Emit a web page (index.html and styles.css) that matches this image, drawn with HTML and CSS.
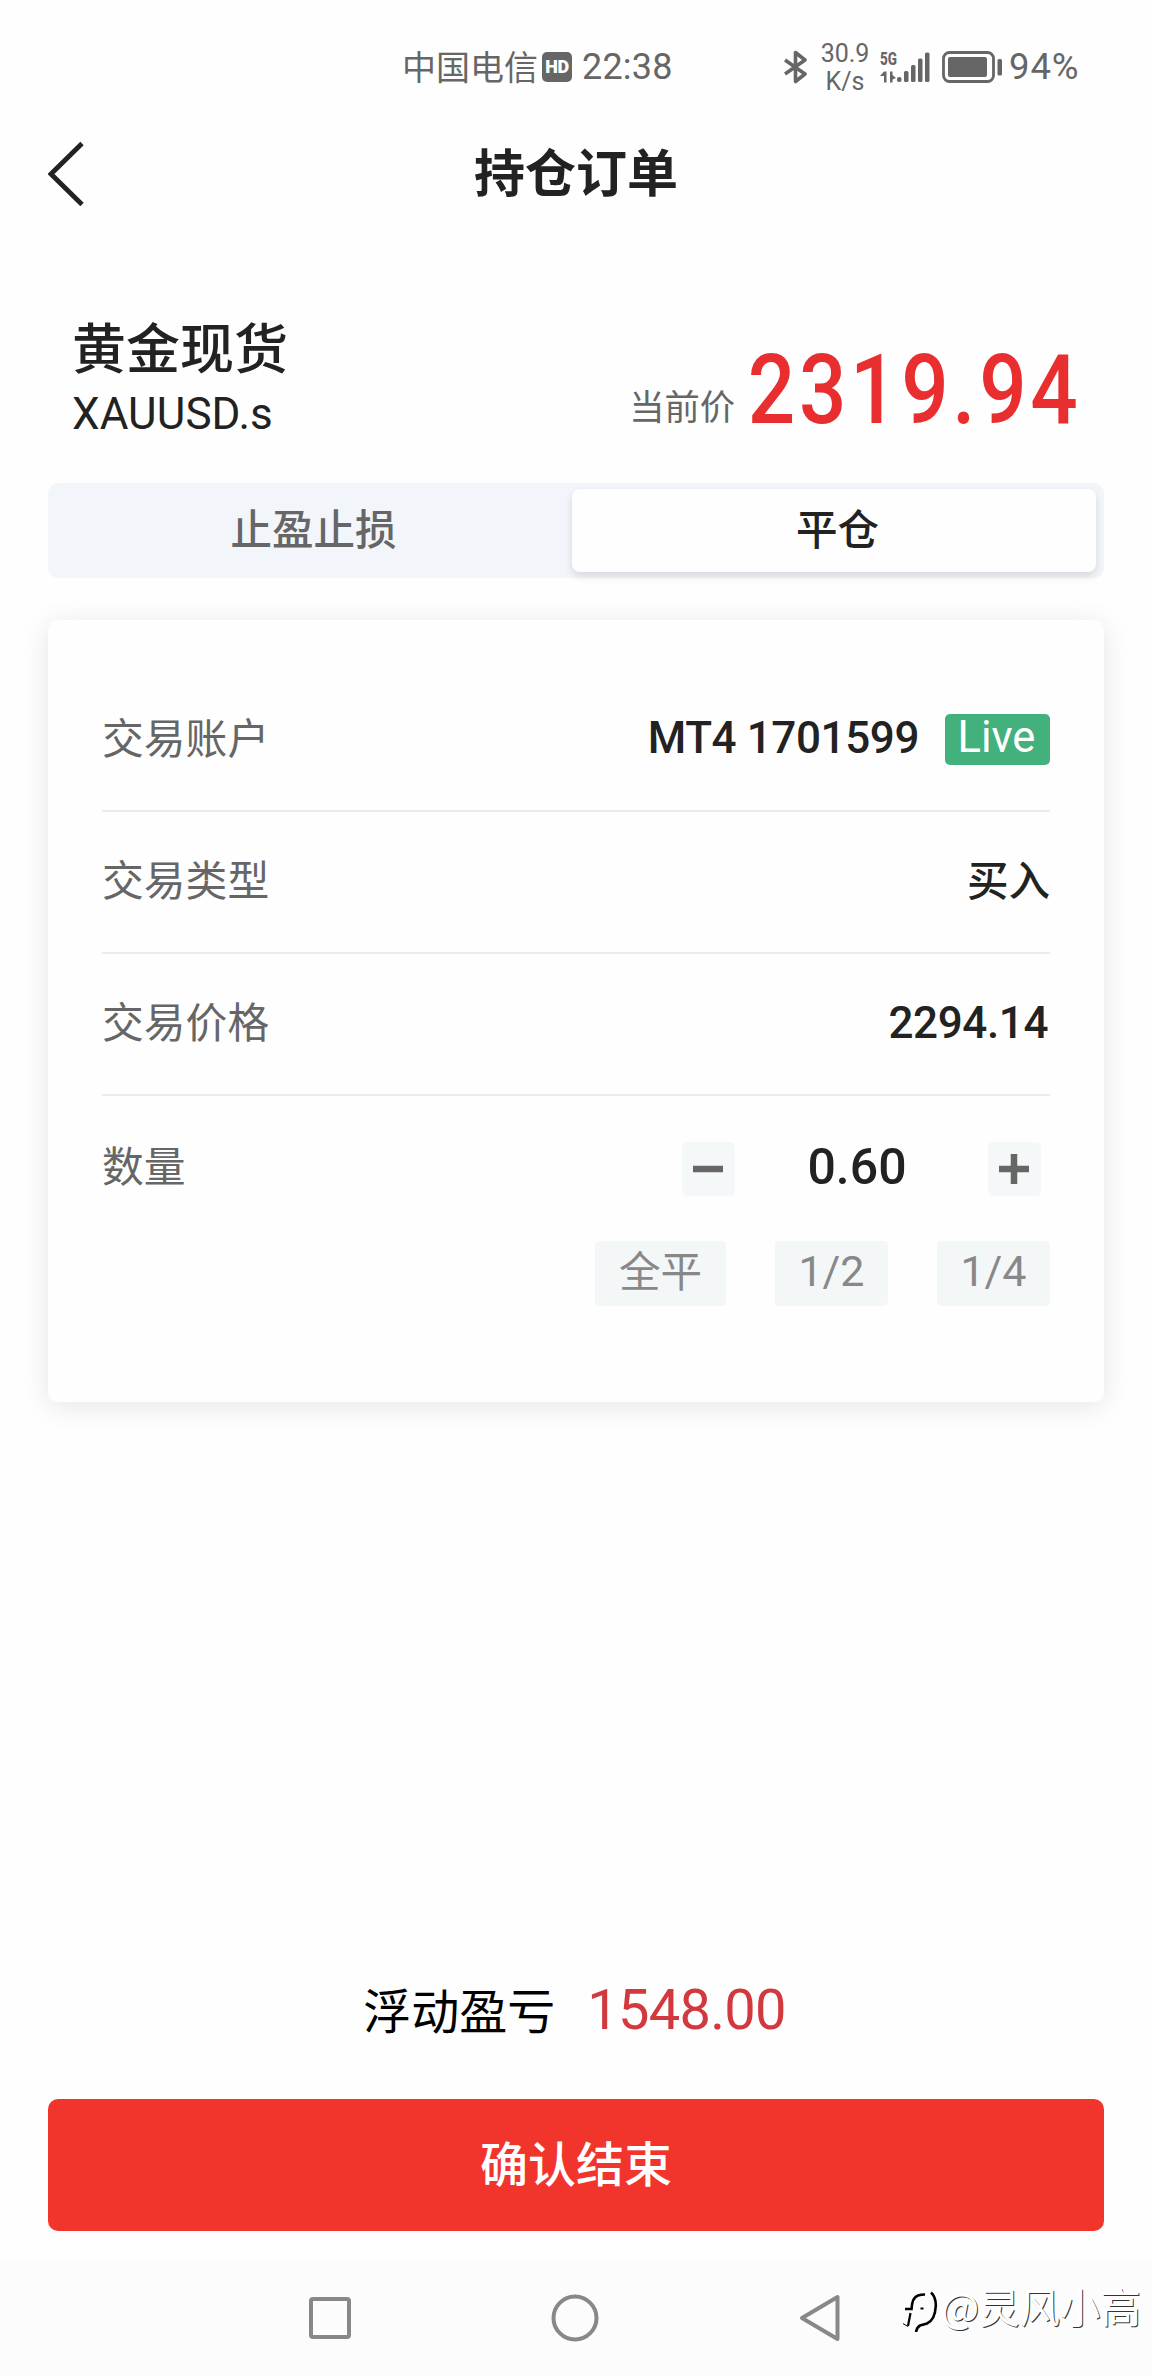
FILE: index.html
```html
<!DOCTYPE html>
<html lang="zh-CN">
<head>
<meta charset="utf-8">
<title>持仓订单</title>
<link rel="stylesheet" href="styles.css">
</head>
<body>
<div class="screen">
  <div class="status">
    <span class="carrier">中国电信</span>
    <span class="hd">HD</span>
    <span class="clock num">22:38</span>
    <svg class="bluetooth" width="24" height="34" viewBox="0 0 24 34" fill="none" stroke="#666" stroke-width="3.6" stroke-linejoin="round"><path d="M1 10 L21 24 L11.500 31.500 V2.500 L21 10 L1 24"/></svg>
    <span class="speed num"><span>30.9</span><span>K/s</span></span>
    <div class="mobile">
      <span class="net">5G</span>
      <svg width="50" height="32" viewBox="0 0 50 32" fill="#666">
        <path d="M4 20.500 V31.500 H6.500 V20.500 Z M0 25 L4 20.500 V25 Z M10 20.500 H12.500 V31.500 H10 Z M12.500 24 L16 27 L12.500 28.500 Z"/>
        <rect x="17" y="26" width="4.500" height="5" rx="2"/><rect x="24" y="20" width="4.500" height="11" rx="1.500"/><rect x="31" y="14" width="4.500" height="17" rx="1.500"/><rect x="38" y="7.500" width="4.500" height="23.500" rx="1.500"/><rect x="45" y="1.500" width="4.500" height="29.500" rx="1.500"/>
      </svg>
    </div>
    <svg class="battery" width="60" height="32" viewBox="0 0 60 32"><rect x="1.500" y="1.500" width="50" height="29" rx="6" fill="none" stroke="#666" stroke-width="2.800"/><rect x="6" y="6" width="39" height="20" rx="2" fill="#666"/><rect x="55.500" y="8" width="4.500" height="16.500" rx="1.500" fill="#666"/></svg>
    <span class="percent num">94%</span>
  </div>

  <header class="header">
    <svg class="back" width="38" height="66" viewBox="0 0 38 66" fill="none" stroke="#222" stroke-width="4.800"><path d="M34 2.500 L3 33 L34 63.500"/></svg>
    <h1 class="title">持仓订单</h1>
  </header>

  <section class="quote">
    <div>
      <div class="name">黄金现货</div>
      <div class="symbol num">XAUUSD.s</div>
    </div>
    <div class="price"><span class="price-label">当前价</span><span class="price-value num">2319.94</span></div>
  </section>

  <div class="tabs">
    <div class="tab">止盈止损</div>
    <div class="tab active">平仓</div>
  </div>

  <section class="card">
    <div class="row"><span class="label">交易账户</span><span class="value num account">MT4 1701599</span><span class="live num">Live</span></div>
    <div class="row"><span class="label">交易类型</span><span class="value">买入</span></div>
    <div class="row"><span class="label">交易价格</span><span class="value num open-price">2294.14</span></div>
    <div class="amount">
      <span class="label">数量</span>
      <div class="stepper">
        <span class="step"><svg width="30" height="30" viewBox="0 0 30 30"><path d="M0 15H30" stroke="#666" stroke-width="6.500"/></svg></span>
        <span class="count num">0.60</span>
        <span class="step"><svg width="30" height="30" viewBox="0 0 30 30"><path d="M0 15H30M15 0V30" stroke="#666" stroke-width="6.500"/></svg></span>
      </div>
    </div>
    <div class="chips"><span class="chip wide">全平</span><span class="chip num">1/2</span><span class="chip num">1/4</span></div>
  </section>

  <div class="profit"><span class="profit-label">浮动盈亏</span><span class="profit-value num">1548.00</span></div>
  <div class="confirm">确认结束</div>

  <nav class="nav">
    <svg width="42" height="42" viewBox="0 0 42 42" fill="none" stroke="#888" stroke-width="4"><rect x="2" y="2" width="38" height="38" rx="2"/></svg>
    <svg width="48" height="48" viewBox="0 0 48 48" fill="none" stroke="#888" stroke-width="4"><circle cx="24" cy="24" r="21.500"/></svg>
    <svg width="42" height="48" viewBox="0 0 42 48" fill="none" stroke="#888" stroke-width="4" stroke-linejoin="round"><path d="M3 24 L38.500 3 V45 Z"/></svg>
  </nav>

  <div class="watermark">
    <svg width="36" height="50" viewBox="0 0 36 50" fill="none" stroke="#000">
      <path d="M2 27 H8.500 Q9 15.500 15 13.500 Q18 12.500 22 12.500" stroke-width="2.600"/>
      <path d="M7.500 31 L5 44" stroke-width="2.200"/>
      <path d="M-1 41 L5 44.500" stroke-width="1"/>
      <path d="M28 10.500 Q33 15 32.800 24 Q32 38 24 41.500 L17 43.500 Q14 45 13 50" stroke-width="2.600"/>
      <path d="M17.500 26.500 H20.500" stroke-width="2"/>
    </svg>
    <span>@灵风小高</span>
  </div>
</div>
</body>
</html>
```
FILE: styles.css
```css
* { box-sizing: border-box; }
body { margin: 0; background: #fefefe; }
svg { display: block; flex: none; }
.screen {
  position: relative;
  display: flex;
  flex-direction: column;
  width: 1152px;
  height: 2376px;
  overflow: hidden;
  color: #222;
  font-family: "Noto Sans CJK SC", sans-serif;
  white-space: nowrap;
}
.num { font-family: Roboto, sans-serif; }

.status { display: flex; align-items: center; height: 133px; margin-bottom: -33px; padding-left: 402px; color: #666; }
.carrier { width: 136px; font-size: 34px; line-height: 38px; padding-bottom: 2px; }
.hd {
  width: 30px; height: 30px; margin: 1px 0 0 4px; border-radius: 5px;
  background: #666; color: #fff;
  font: 900 18px/30px Roboto, sans-serif; letter-spacing: -0.5px; text-align: center;
}
.clock { width: 92px; margin-left: 10px; font-size: 36px; letter-spacing: .2px; }
.bluetooth { margin-left: 110px; }
.speed {
  display: flex; flex-direction: column; align-items: center;
  width: 56px; margin: 2px 0 0 9px; font-size: 25px; line-height: 27.500px;
}
.mobile { position: relative; margin-left: 7px; }
.net {
  position: absolute; left: 0; top: -2px;
  font: 800 18px/20px Roboto, sans-serif; transform: scaleX(.75); transform-origin: left;
}
.battery { margin-left: 12px; }
.percent { margin-left: 7px; font-size: 36.500px; letter-spacing: .9px; }

.header { display: flex; align-items: center; height: 148px; padding: 0 48px; }
.title {
  flex: 1; margin: -8px 38px 0 0; text-align: center;
  font-size: 51px; font-weight: 700; line-height: 60px;
}

.quote { display: flex; justify-content: space-between; height: 235px; padding: 68px 77px 0 72px; }
.name { font-size: 54px; font-weight: 500; line-height: 60px; }
.symbol { margin-top: 13px; font-size: 44px; line-height: 50px; letter-spacing: .1px; }
.price { display: flex; align-items: baseline; height: 110px; margin-top: 19px; line-height: 110px; }
.price-label { margin: 0 12.500px 0 0; color: #666; font-size: 35.300px; position: relative; top: -3px; }
.price-value {
  margin: 0 -6px 0 -50px; color: #e92e30;
  font-size: 96px; font-weight: 500; letter-spacing: 4.200px;
  transform: scaleX(.87); transform-origin: right;
}

.tabs {
  display: flex; height: 95px; margin: 0 48px; padding: 6px 8px 6px 0;
  border-radius: 10px; background: #f2f5fa;
}
.tab {
  flex: 1; height: 83px; padding-left: 7px; color: #666; text-align: center;
  font-size: 41.500px; font-weight: 500; line-height: 77px;
}
.active { border-radius: 8px; background: #fefefe; color: #222; box-shadow: 0 4px 8px rgba(0, 0, 0, .12); }

.card {
  height: 782px; margin: 42px 48px 0; padding: 50px 54px 0;
  border-radius: 10px; background: #fefefe; box-shadow: 0 4px 28px rgba(0, 0, 0, .1);
}
.row { display: flex; align-items: center; height: 142px; padding-bottom: 8px; border-bottom: 2px solid #ebebeb; }
.label { flex: 1; color: #666; font-size: 41.800px; line-height: 50px; }
.value { font-size: 41.500px; font-weight: 500; }
.value.num { padding-top: 3px; font-size: 44px; }
.account { letter-spacing: -.4px; }
.open-price { margin-right: 2px; letter-spacing: -.4px; }
.row .open-price { padding-top: 6px; }
.live {
  width: 105px; height: 51px; margin: 7px 0 0 26px; padding-right: 2px; border-radius: 5px;
  background: #43b17c; color: #fff; font-size: 43.500px; line-height: 47px; text-align: center;
}
.amount { display: flex; align-items: center; height: 54px; margin-top: 46px; }
.amount .label { margin-top: -10px; }
.stepper { display: flex; justify-content: space-between; align-items: center; width: 359px; margin-right: 9.500px; }
.step { display: flex; align-items: center; justify-content: center; width: 53px; height: 54px; border-radius: 5px; background: #f5f8f8; }
.count { margin-top: -5px; padding-right: 8px; font-size: 50px; font-weight: 500; }
.chips { display: flex; justify-content: flex-end; gap: 49px; margin-top: 45px; }
.chip {
  width: 113px; height: 65px; border-radius: 4px; background: #f4f7f8; color: #888;
  font-size: 43px; line-height: 61px; text-align: center;
}
.wide { width: 131px; font-size: 41.500px; line-height: 56px; }

.profit { display: flex; align-items: center; justify-content: center; height: 70px; margin-top: 571px; padding-right: 3px; }
.profit-label { color: #000; font-size: 48px; }
.profit-value { margin: 4px 0 0 32px; color: #d1393f; font-size: 56px; letter-spacing: -.7px; }
.confirm {
  height: 132px; margin: 56px 48px 0; border-radius: 10px;
  background: #f2352c; color: #fff; text-align: center;
  font-size: 48px; font-weight: 500; line-height: 124px;
}
.nav { display: flex; align-items: center; justify-content: space-between; height: 115px; margin-top: 30px; padding: 0 311px 1px 309px; background: #fcfcfc; }
.watermark {
  position: absolute; left: 903px; top: 2281px; display: flex; align-items: center; gap: 2px;
  color: #fff; font-size: 40.400px; line-height: 54px; text-shadow: 1px 1px 0 #333;
}
.watermark span { margin-top: -2px; }
```
